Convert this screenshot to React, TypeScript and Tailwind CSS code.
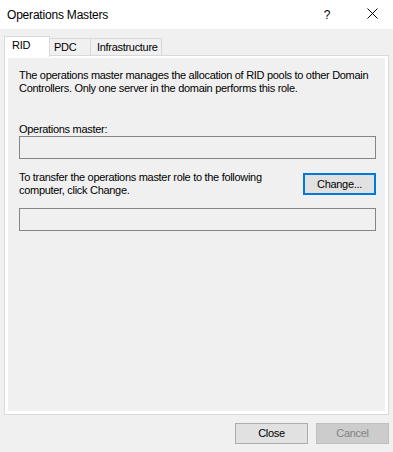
import React from "react";

// Windows 10 style "Operations Masters" dialog
const TABS = [
  { id: "rid", label: "RID", width: "w-[46px]", pad: "pl-[7px]" },
  { id: "pdc", label: "PDC", width: "w-[41px]", pad: "pl-[4px]" },
  { id: "infra", label: "Infrastructure", width: "w-[71px]", pad: "pl-[6px]" },
];

function CloseGlyph() {
  return (
    <svg width="11" height="11" viewBox="0 0 11 11" className="mt-[8px] self-start">
      <path d="M0.5 0.5 L10.5 10.5 M10.5 0.5 L0.5 10.5" stroke="#000" strokeWidth="1" fill="none" />
    </svg>
  );
}

function DialogButton({
  label,
  disabled = false,
}: {
  label: string;
  disabled?: boolean;
}) {
  return (
    <button
      className={
        disabled
          ? "w-[73px] h-[21px] bg-[#cccccc] border border-[#bfbfbf] text-[#838383] text-[11px] leading-none"
          : "w-[73px] h-[21px] bg-[#e1e1e1] border border-[#adadad] text-black text-[11px] leading-none"
      }
    >
      {label}
    </button>
  );
}

export default function App() {
  return (
    <div className="w-[393px] h-[452px] bg-[#f0f0f0] flex flex-col font-['Liberation_Sans',Arial,sans-serif] tracking-[-0.3px] text-black overflow-hidden">
      {/* Title bar */}
      <div className="h-[29px] bg-white flex items-center pl-[7px]">
        <span className="flex-1 text-[12px] tracking-[-0.2px]">Operations Masters</span>
        <span className="w-[10px] text-center text-[12px] mr-[35px]">?</span>
        <CloseGlyph />
        <div className="w-[15px]" />
      </div>

      {/* Tabs */}
      <div className="pt-[7px] px-[4px]">
        <div className="h-[19px] flex items-end">
          {TABS.map((tab, i) =>
            i === 0 ? (
              <div
                key={tab.id}
                className={`${tab.width} ${tab.pad} h-[21px] -mb-[2px] relative z-10 bg-white border-l border-t border-r border-[#d9d9d9] pt-[2px] text-[11px] leading-[13px]`}
              >
                {tab.label}
              </div>
            ) : (
              <div
                key={tab.id}
                className={`${tab.width} ${tab.pad} h-[17px] bg-[#f0f0f0] border-t border-r border-[#d9d9d9] pt-[2px] text-[11px] leading-[13px]`}
              >
                {tab.label}
              </div>
            )
          )}
        </div>

        {/* Tab panel */}
        <div className="h-[360px] border border-[#d9d9d9] bg-white pt-[2px] px-[3px] pb-[3px] flex flex-col">
          <div className="flex-1 bg-[#f0f0f0] pl-[11px] pr-[9px] pt-[11px] text-[11px] leading-[13px]">
            <p>
              The operations master manages the allocation of RID pools to other Domain
              Controllers. Only one server in the domain performs this role.
            </p>

            <div className="mt-[28px]">Operations master:</div>
            <div className="h-[23px] border border-[#858585] bg-[#f0f0f0]" />

            <div className="mt-[12px] flex gap-[8px]">
              <p className="flex-1">
                To transfer the operations master role to the following computer, click
                Change.
              </p>
              <button className="mt-[2px] w-[73px] h-[22px] bg-[#e1e1e1] border-2 border-[#0078d7] text-[11px] leading-none">
                Change...
              </button>
            </div>

            <div className="mt-[11px] h-[23px] border border-[#858585] bg-[#f0f0f0]" />
          </div>
        </div>
      </div>

      {/* Footer buttons */}
      <div className="pt-[8px] pr-[4px] flex justify-end gap-[8px]">
        <DialogButton label="Close" />
        <DialogButton label="Cancel" disabled />
      </div>
    </div>
  );
}
